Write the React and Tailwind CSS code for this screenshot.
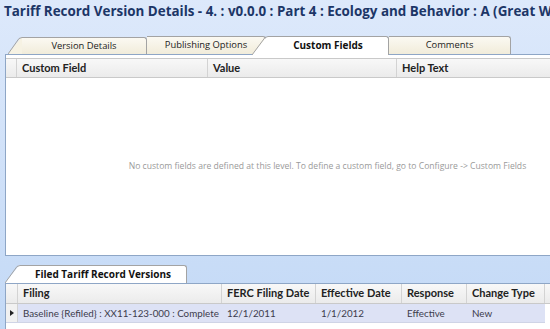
import React from "react";

const Slant = ({ fill, width = 15, height = 18 }) => (
  <svg width={width} height={height} viewBox={`0 0 ${width} ${height}`} className="block shrink-0">
    <polygon points={`0,${height} ${width - 1},0.5 ${width},0.5 ${width},${height}`} fill={fill} />
    <polyline
      points={`0,${height} ${width - 3},1.5 ${width},0.5`}
      fill="none"
      stroke="#a3a3a3"
      strokeWidth="1"
    />
  </svg>
);

const headerCell =
  "flex h-full items-center whitespace-nowrap border-r border-[#d3d3d3] pl-[5px] font-['Lato',sans-serif] text-[11px] font-bold text-[#222]";

const dataCell =
  "flex items-center overflow-hidden whitespace-nowrap bg-[#dde2f5] pl-[5px]";

const App = () => {
  return (
    <div
      className="h-[329px] w-[550px] overflow-hidden bg-gradient-to-b from-[#dde9fb] to-[#c3d9f6]"
      style={{ fontFamily: "'Open Sans', 'Liberation Sans', sans-serif" }}
    >
      {/* title */}
      <div className="h-[36px] whitespace-nowrap pl-[4px] pt-[1px] text-[13.4px] font-bold leading-[20px] text-[#1c3667]">
        Tariff Record Version Details - 4. : v0.0.0 : Part 4 : Ecology and Behavior : A (Great Western Hotels)
      </div>

      {/* tabs */}
      <div className="flex h-[18px] items-end whitespace-nowrap pl-[8px] text-[9.4px] text-[#222]">
        <div className="relative z-[3] flex h-[17px]">
          <Slant fill="#f6f2e3" width={14} height={17} />
          <div className="flex w-[125px] items-center justify-center rounded-tr-[3px] border-r border-t border-[#a3a3a3] bg-gradient-to-b from-[#fbf9f2] to-[#f1ecda]">
            Version Details
          </div>
        </div>
        <div className="relative z-[2] flex h-[18px] w-[119px] items-center justify-center rounded-tr-[3px] border-r border-t border-[#a3a3a3] bg-gradient-to-b from-[#fbf9f2] to-[#f1ecda]">
          Publishing Options
        </div>
        <div className="relative z-[5] -ml-[14px] flex h-[19px] translate-y-[1px]">
          <Slant fill="#ffffff" width={16} height={19} />
          <div className="flex w-[121px] items-center justify-center rounded-tr-[3px] border-r border-t border-[#a3a3a3] bg-white pb-[1px] text-[10px] font-bold text-[#111]">
            Custom Fields
          </div>
        </div>
        <div className="relative z-[1] flex h-[18px] w-[122px] items-center justify-center rounded-tr-[3px] border-r border-t border-[#a3a3a3] bg-gradient-to-b from-[#fbf9f2] to-[#f1ecda]">
          Comments
        </div>
      </div>

      {/* custom fields panel */}
      <div className="ml-[5px] flex h-[202px] w-[645px] flex-col border border-[#8ea6c6] bg-white pt-[3px]">
        <div className="flex h-[20px] border-y border-[#c9c9c9] bg-gradient-to-b from-[#f8f8f8] to-[#ebebeb]">
          <div className="h-full w-[11px] border-r border-[#d3d3d3]" />
          <div className={`${headerCell} w-[191px]`}>Custom Field</div>
          <div className={`${headerCell} w-[189px]`}>Value</div>
          <div className={`${headerCell} flex-1`}>Help Text</div>
        </div>
        <div className="flex flex-1 items-center justify-center whitespace-nowrap pb-[1px] text-[8.6px] text-[#9a9a9a]">
          No custom fields are defined at this level. To define a custom field, go to Configure -&gt; Custom Fields
        </div>
      </div>

      {/* filed versions tab */}
      <div className="mt-[9px] flex h-[18px] pl-[5px]">
        <Slant fill="#ffffff" width={15} height={18} />
        <div className="flex w-[167px] items-center justify-center whitespace-nowrap rounded-tr-[3px] border-r border-t border-[#a3a3a3] bg-white text-[10px] font-bold text-[#111]">
          Filed Tariff Record Versions
        </div>
      </div>

      {/* filed versions grid */}
      <div className="ml-[5px] h-[60px] border-l border-t border-[#8ea6c6] bg-white">
        <div className="flex h-[20px] border-b border-[#c9c9c9] bg-gradient-to-b from-[#f8f8f8] to-[#ebebeb]">
          <div className="h-full w-[12px] border-r border-[#d3d3d3]" />
          <div className={`${headerCell} w-[204px]`}>Filing</div>
          <div className={`${headerCell} w-[94px]`}>FERC Filing Date</div>
          <div className={`${headerCell} w-[86px]`}>Effective Date</div>
          <div className={`${headerCell} w-[65px]`}>Response</div>
          <div className={`${headerCell} w-[78px]`}>Change Type</div>
          <div className="flex-1" />
        </div>
        <div className="flex h-[19px] w-[539px] border-b border-[#cfd4e6] font-['Lato',sans-serif] text-[9.8px] text-[#3c3c4c]">
          <div className="flex h-full w-[12px] items-center justify-center border-r border-[#d3d3d3] bg-[#f1f1f1]">
            <svg width="4" height="6" viewBox="0 0 4 6">
              <polygon points="0,0 4,3 0,6" fill="#222" />
            </svg>
          </div>
          <div className={`${dataCell} w-[204px]`}>
            Baseline {"{Refiled}"} : XX11-123-000 : Complete
          </div>
          <div className={`${dataCell} w-[94px]`}>12/1/2011</div>
          <div className={`${dataCell} w-[86px]`}>1/1/2012</div>
          <div className={`${dataCell} w-[65px]`}>Effective</div>
          <div className={`${dataCell} w-[78px]`}>New</div>
        </div>
      </div>
    </div>
  );
};

export default App;
